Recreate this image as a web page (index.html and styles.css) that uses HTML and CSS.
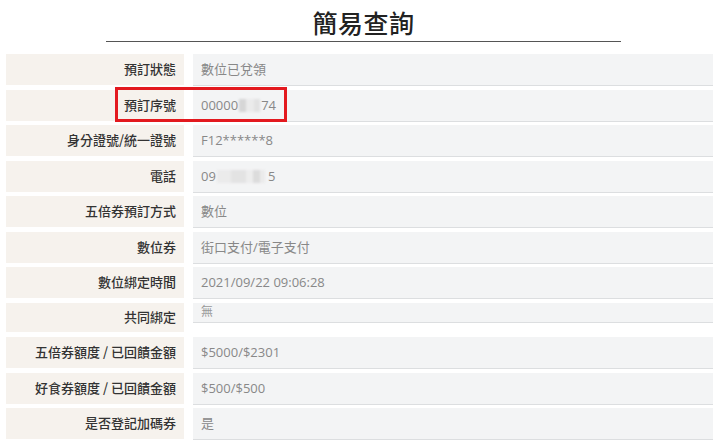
FILE: index.html
```html
<!DOCTYPE html>
<html lang="zh-Hant">
<head>
<meta charset="utf-8">
<title>簡易查詢</title>
<link rel="stylesheet" href="styles.css">
</head>
<body>
<div class="page">
  <header class="head">
    <h1 class="title">簡易查詢</h1>
  </header>
  <div class="table">
    <div class="row"><div class="label">預訂狀態</div><div class="value">數位已兌領</div></div>
    <div class="row row-hl"><div class="label">預訂序號</div><div class="value">00000<span class="blur blur-a"></span>74</div><div class="mark"></div></div>
    <div class="row"><div class="label">身分證號/統一證號</div><div class="value">F12******8</div></div>
    <div class="row"><div class="label">電話</div><div class="value">09<span class="blur blur-b"></span>5</div></div>
    <div class="row"><div class="label">五倍券預訂方式</div><div class="value">數位</div></div>
    <div class="row"><div class="label">數位券</div><div class="value">街口支付/電子支付</div></div>
    <div class="row"><div class="label">數位綁定時間</div><div class="value">2021/09/22 09:06:28</div></div>
    <div class="row row-short"><div class="label">共同綁定</div><div class="value value-short">無</div></div>
    <div class="row"><div class="label">五倍券額度 / 已回饋金額</div><div class="value">$5000/$2301</div></div>
    <div class="row"><div class="label">好食券額度 / 已回饋金額</div><div class="value">$500/$500</div></div>
    <div class="row"><div class="label">是否登記加碼券</div><div class="value">是</div></div>
  </div>
</div>
</body>
</html>
```
FILE: styles.css
```css
html, body {
  margin: 0;
  padding: 0;
  background: #ffffff;
}
body {
  font-family: "Open Sans", "Noto Sans CJK TC", sans-serif;
  font-size: 13px;
}
.page {
  width: 720px;
  height: 445px;
  overflow: hidden;
}
.head {
  margin-left: 106px;
  width: 515px;
  padding-top: 7px;
  padding-bottom: 4px;
  border-bottom: 1px solid #555;
}
.title {
  margin: 0;
  text-align: center;
  font-family: "Noto Sans CJK TC", sans-serif;
  font-size: 25px;
  line-height: 30px;
  font-weight: 500;
  color: #222;
  letter-spacing: 0.5px;
}
.table {
  margin-top: 12px;
  padding: 0 7px 0 6px;
  display: flex;
  flex-direction: column;
  gap: 3.5px;
}
.row {
  display: flex;
  align-items: flex-start;
  gap: 9px;
  height: 32px;
  position: relative;
}
.label {
  flex: 0 0 178px;
  height: 31px;
  box-sizing: border-box;
  background: #f6f2ed;
  text-align: right;
  padding-right: 8px;
  padding-bottom: 2px;
  font-family: "Noto Sans CJK TC", sans-serif;
  font-weight: 500;
  color: #333;
  line-height: 29px;
}
.value {
  flex: 1;
  height: 32px;
  box-sizing: border-box;
  background: #f3f4f5;
  border-bottom: 1px solid #dcdee0;
  padding-left: 8px;
  line-height: 31px;
  color: #888;
  white-space: nowrap;
}
.row-short {
  height: 29px;
  margin-top: 0.5px;
  margin-bottom: 1.5px;
}
.row-short .label {
  height: 29px;
  line-height: 28px;
  padding-bottom: 1px;
}
.value-short {
  height: 20px;
  line-height: 18px;
  font-size: 12px;
  color: #999;
}
.blur {
  display: inline-block;
  vertical-align: middle;
  height: 13px;
  margin-top: -2px;
  filter: blur(1.2px);
}
.blur-a {
  width: 21px;
  margin-left: 1px;
  margin-right: 1px;
  background: linear-gradient(90deg, #d6d6d6 0 35%, #ebebeb 35% 70%, #e2e2e2 70% 100%);
}
.blur-b {
  width: 48px;
  margin-left: 1px;
  margin-right: 3px;
  background: linear-gradient(90deg, #ebebeb 0 30%, #e3e3e3 30% 60%, #ededed 60% 75%, #dcdcdc 75% 90%, #ebebeb 90% 100%);
}
.mark {
  position: absolute;
  left: 109px;
  top: -2.5px;
  width: 172px;
  height: 35px;
  box-sizing: border-box;
  border: 3px solid #e3191f;
  pointer-events: none;
}
```
